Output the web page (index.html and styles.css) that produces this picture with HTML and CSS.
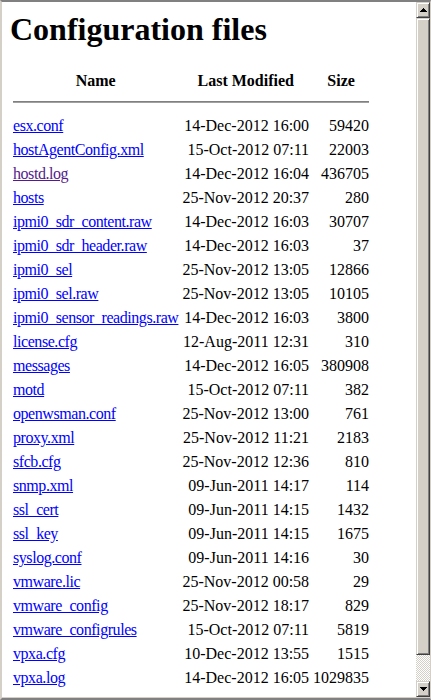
FILE: index.html
```html
<!DOCTYPE html>
<html lang="en">
<head>
  <meta charset="UTF-8">
  <title>Configuration files</title>
  <link rel="stylesheet" href="styles.css">
</head>
<body>
  <div class="window">
    <div class="viewport">
      <h1>Configuration files</h1>
      <table class="listing">
        <tr><th>Name</th><th>Last Modified</th><th>Size</th></tr>
        <tr><th colspan="3" class="rule"><hr></th></tr>
        <tr><td><a href="#">esx.conf</a></td><td class="date">14-Dec-2012 16:00</td><td class="size">59420</td></tr>
        <tr><td><a href="#">hostAgentConfig.xml</a></td><td class="date">15-Oct-2012 07:11</td><td class="size">22003</td></tr>
        <tr><td><a href="#" class="visited">hostd.log</a></td><td class="date">14-Dec-2012 16:04</td><td class="size">436705</td></tr>
        <tr><td><a href="#">hosts</a></td><td class="date">25-Nov-2012 20:37</td><td class="size">280</td></tr>
        <tr><td><a href="#">ipmi0_sdr_content.raw</a></td><td class="date">14-Dec-2012 16:03</td><td class="size">30707</td></tr>
        <tr><td><a href="#">ipmi0_sdr_header.raw</a></td><td class="date">14-Dec-2012 16:03</td><td class="size">37</td></tr>
        <tr><td><a href="#">ipmi0_sel</a></td><td class="date">25-Nov-2012 13:05</td><td class="size">12866</td></tr>
        <tr><td><a href="#">ipmi0_sel.raw</a></td><td class="date">25-Nov-2012 13:05</td><td class="size">10105</td></tr>
        <tr><td><a href="#">ipmi0_sensor_readings.raw</a></td><td class="date">14-Dec-2012 16:03</td><td class="size">3800</td></tr>
        <tr><td><a href="#">license.cfg</a></td><td class="date">12-Aug-2011 12:31</td><td class="size">310</td></tr>
        <tr><td><a href="#">messages</a></td><td class="date">14-Dec-2012 16:05</td><td class="size">380908</td></tr>
        <tr><td><a href="#">motd</a></td><td class="date">15-Oct-2012 07:11</td><td class="size">382</td></tr>
        <tr><td><a href="#">openwsman.conf</a></td><td class="date">25-Nov-2012 13:00</td><td class="size">761</td></tr>
        <tr><td><a href="#">proxy.xml</a></td><td class="date">25-Nov-2012 11:21</td><td class="size">2183</td></tr>
        <tr><td><a href="#">sfcb.cfg</a></td><td class="date">25-Nov-2012 12:36</td><td class="size">810</td></tr>
        <tr><td><a href="#">snmp.xml</a></td><td class="date">09-Jun-2011 14:17</td><td class="size">114</td></tr>
        <tr><td><a href="#">ssl_cert</a></td><td class="date">09-Jun-2011 14:15</td><td class="size">1432</td></tr>
        <tr><td><a href="#">ssl_key</a></td><td class="date">09-Jun-2011 14:15</td><td class="size">1675</td></tr>
        <tr><td><a href="#">syslog.conf</a></td><td class="date">09-Jun-2011 14:16</td><td class="size">30</td></tr>
        <tr><td><a href="#">vmware.lic</a></td><td class="date">25-Nov-2012 00:58</td><td class="size">29</td></tr>
        <tr><td><a href="#">vmware_config</a></td><td class="date">25-Nov-2012 18:17</td><td class="size">829</td></tr>
        <tr><td><a href="#">vmware_configrules</a></td><td class="date">15-Oct-2012 07:11</td><td class="size">5819</td></tr>
        <tr><td><a href="#">vpxa.cfg</a></td><td class="date">10-Dec-2012 13:55</td><td class="size">1515</td></tr>
        <tr><td><a href="#">vpxa.log</a></td><td class="date">14-Dec-2012 16:05</td><td class="size">1029835</td></tr>
      </table>
    </div>
    <div class="scrollbar">
      <div class="sb-btn">
        <svg width="7" height="4" viewBox="0 0 7 4"><path d="M3 0h1v1h1v1h1v1h1v1H0V3h1V2h1V1h1z"/></svg>
      </div>
      <div class="sb-thumb"></div>
      <div class="sb-track"></div>
      <div class="sb-btn">
        <svg width="7" height="4" viewBox="0 0 7 4"><path d="M0 0h7v1H6v1H5v1H4v1H3V3H2V2H1V1H0z"/></svg>
      </div>
    </div>
  </div>
</body>
</html>
```

FILE: styles.css
```css
body {
  margin: 0;
  font-family: "Liberation Serif", "Times New Roman", serif;
  color: #000;
}
.window {
  box-sizing: border-box;
  width: 431px;
  height: 700px;
  display: flex;
  background: #d4d0c8;
  border-top: 2px solid #808080;
  border-left: 2px solid #d4d0c8;
  border-right: 1px solid #d4d0c8;
  border-bottom: 2px solid #808080;
  padding-bottom: 1px;
}
.viewport {
  flex: 1;
  overflow: hidden;
  background: #fff;
  padding: 9px 0 0 8px;
}
h1 {
  margin: 0 0 21px;
  font-size: 32px;
  line-height: 36px;
  font-weight: bold;
}
.listing {
  border-spacing: 2px;
  font-size: 16px;
  line-height: 20px;
}
.listing th,
.listing td {
  padding: 1px;
  white-space: nowrap;
}
.listing th {
  font-weight: bold;
  text-align: center;
}
.listing .rule hr {
  margin: 6px 0 9px;
  height: 0;
  border: none;
  border-top: 1px solid #808080;
  border-bottom: 1px solid #a0a0a0;
}
.listing .date,
.listing .size {
  text-align: right;
}
.listing a {
  color: #0000ff;
  letter-spacing: -0.44px;
}
.listing a.visited {
  color: #551a8b;
}
.scrollbar {
  width: 14px;
  display: flex;
  flex-direction: column;
}
.sb-btn,
.sb-thumb {
  box-sizing: border-box;
  background: #d4d0c8;
  border: 1px solid;
  border-color: #d4d0c8 #404040 #404040 #d4d0c8;
  box-shadow: inset 1px 1px #fff, inset -1px -1px #808080;
}
.sb-btn {
  height: 16px;
  display: flex;
  align-items: center;
  justify-content: center;
}
.sb-btn svg {
  display: block;
  fill: #000;
}
.sb-thumb {
  height: 637px;
}
.sb-track {
  flex: 1;
  background: repeating-conic-gradient(#d4d0c8 0 25%, #fff 0 50%) 0 0 / 2px 2px;
}
```
